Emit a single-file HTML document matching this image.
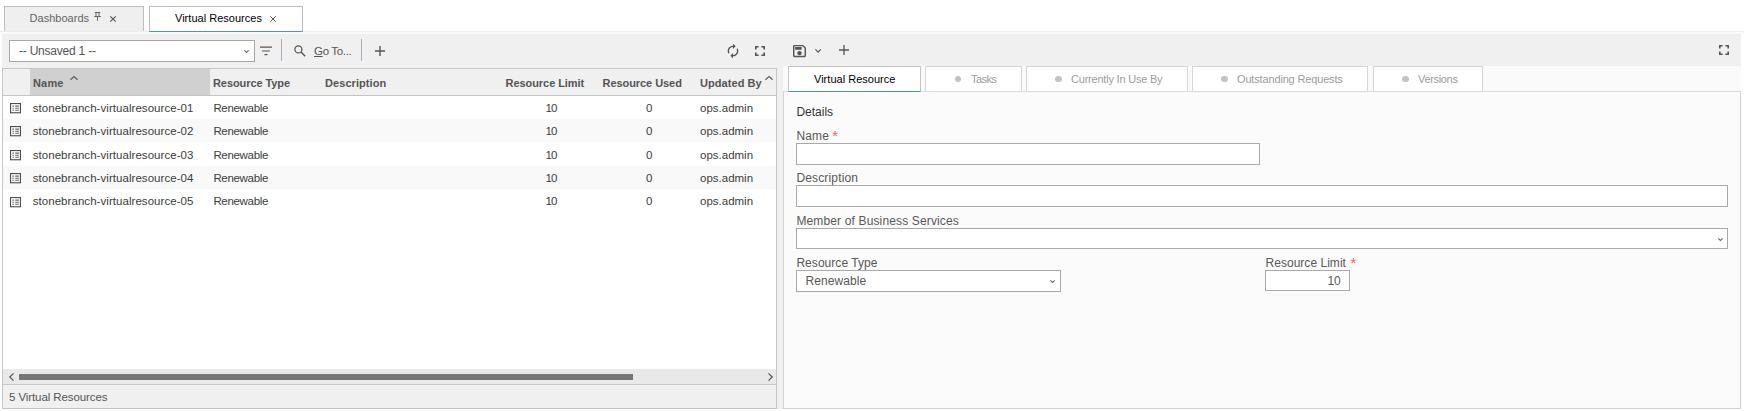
<!DOCTYPE html>
<html>
<head>
<meta charset="utf-8">
<title>Virtual Resources</title>
<style>
html,body{margin:0;padding:0;}
body{width:1744px;height:411px;position:relative;overflow:hidden;background:#fff;
 font-family:"Liberation Sans",sans-serif;font-size:12px;color:#3a3a3a;}
.a{position:absolute;box-sizing:border-box;}
.t{position:absolute;white-space:nowrap;line-height:14px;}
svg{position:absolute;overflow:visible;}
.hd{font-weight:bold;color:#545454;font-size:11px;margin-top:0.2px;}
.rw{color:#3c3c3c;}
.lb{color:#585858;}
.c1{left:32.7px;}.c2{left:213.4px;}.c3{left:545.5px;}.c4{left:646px;}.c5{left:700px;}
.tab2{background:#fff;border:1px solid #d6d6d6;border-bottom:none;top:66px;height:25px;}
.tt{color:#9c9c9c;top:72.3px;}
.dot{width:6.4px;height:6.4px;border-radius:50%;background:#c3c3c3;top:75.9px;margin-left:0.4px;}
.inp{background:#fff;border:1px solid #a9a9a9;}
.req{color:#ff5a5a;font-size:15px;}
#t_dash,#t_vr,#r_vr,.tt{font-size:11px;}
.rw{font-size:11.5px;}
#t_goto,#t_foot{font-size:11.5px;}
/*LS*/
#t_dash{letter-spacing:0.033px;}
#t_vr{letter-spacing:0.019px;}
#t_uns{letter-spacing:-0.221px;}
#t_goto{letter-spacing:-0.329px;}
#h_name{letter-spacing:0.167px;}
#h_rt{letter-spacing:-0.083px;}
#h_desc{letter-spacing:0.07px;}
#h_rl{letter-spacing:-0.054px;}
#h_ru{letter-spacing:-0.058px;}
#h_ub{letter-spacing:0.067px;}
.c1{letter-spacing:0.055px;}
.c2{letter-spacing:-0.325px;}
.c3{letter-spacing:-0.9px;}
#t_foot{letter-spacing:-0.089px;}
#r_vr{letter-spacing:0.02px;}
#r_tasks{letter-spacing:-0.575px;}
#r_cur{letter-spacing:-0.211px;}
#r_out{letter-spacing:-0.158px;}
#r_ver{letter-spacing:-0.329px;}
#f_name{letter-spacing:0.133px;}
#f_desc{letter-spacing:0.16px;}
#f_mem{letter-spacing:0.142px;}
#f_rt{letter-spacing:0.05px;}
#f_ren{letter-spacing:0.075px;}
#f_rl{letter-spacing:0.031px;}
#f_10{letter-spacing:-0.2px;}
/*ENDLS*/
</style>
</head>
<body>

<!-- top tab strip -->
<div class="a" style="left:0;top:31px;width:1744px;height:3px;background:#fafafa;border-top:1px solid #ececec;"></div>
<div class="a" style="left:4px;top:6px;width:140px;height:25px;background:#efefef;border:1px solid #bdbdbd;border-bottom:none;"></div>
<div class="t" id="t_dash" style="left:29.5px;top:11.3px;color:#646464;">Dashboards</div>
<svg style="left:94px;top:12px" width="7" height="9" viewBox="0 0 7 9"><path d="M0.8 0.5h5.4M2 0.5v4M5 0.5v4M0.200 4.5h6.6M3.5 4.5v4.3" stroke="#666" stroke-width="1" fill="none"/></svg>
<svg style="left:110.4px;top:15.5px" width="6" height="6" viewBox="0 0 6 6"><path d="M0.3 0.3L5.7 5.7M5.7 0.3L0.3 5.7" stroke="#555" stroke-width="1.15" fill="none"/></svg>
<div class="a" style="left:149px;top:6px;width:154px;height:26px;background:#fff;border:1px solid #bdbdbd;border-bottom:1px solid #4a90e8;"></div>
<div class="t" id="t_vr" style="left:175px;top:11.3px;color:#000;">Virtual Resources</div>
<svg style="left:269.5px;top:15.5px" width="6" height="6" viewBox="0 0 6 6"><path d="M0.3 0.3L5.7 5.7M5.7 0.3L0.3 5.7" stroke="#555" stroke-width="1" fill="none"/></svg>

<!-- toolbar background -->
<div class="a" style="left:2px;top:34px;width:1739px;height:32px;background:#f0f0f0;"></div>
<div class="a" style="left:2px;top:66px;width:781px;height:343px;background:#f0f0f0;"></div>

<!-- left toolbar -->
<div class="a inp" style="left:9px;top:40px;width:246px;height:22px;border-color:#a6a6a6;"></div>
<div class="t" id="t_uns" style="left:19px;top:44px;color:#555;">-- Unsaved 1 --</div>
<svg style="left:244px;top:49.5px" width="5" height="3" viewBox="0 0 5 3"><path d="M0.3 0.3L2.5 2.5L4.7 0.3" stroke="#6c6c6c" stroke-width="1.15" fill="none"/></svg>
<svg style="left:260px;top:46px" width="12" height="10" viewBox="0 0 12 10"><path d="M0 1.2h12M2 5h8M4.5 8.6h3" stroke="#555" stroke-width="1.2" fill="none"/></svg>
<div class="a" style="left:281px;top:39px;width:1px;height:22px;background:#a3adbd;"></div>
<svg style="left:293.5px;top:45px" width="12" height="12" viewBox="0 0 12 12"><circle cx="4.4" cy="4.4" r="3.5" stroke="#555" stroke-width="1.3" fill="none"/><path d="M7 7L11.2 11.2" stroke="#555" stroke-width="1.4"/></svg>
<div class="t" id="t_goto" style="left:314px;top:44px;color:#555;"><span style="text-decoration:underline;text-underline-offset:1.2px;">G</span>o To...</div>
<div class="a" style="left:361px;top:39px;width:1px;height:22px;background:#a3adbd;"></div>
<svg style="left:375px;top:46px" width="10" height="10" viewBox="0 0 10 10"><path d="M5 0v10M0 5h10" stroke="#555" stroke-width="1.4" fill="none"/></svg>

<svg style="left:725px;top:42.8px" width="16" height="16" viewBox="0 0 24 24"><path fill="#555" d="M12 6v3l4-4-4-4v3c-4.42 0-8 3.58-8 8 0 1.57.46 3.03 1.24 4.26L6.7 14.8c-.45-.83-.7-1.79-.7-2.8 0-3.310 2.69-6 6-6zm6.76 1.74L17.3 9.2c.44.84.7 1.79.7 2.8 0 3.31-2.69 6-6 6v-3l-4 4 4 4v-3c4.42 0 8-3.58 8-8 0-1.57-.46-3.03-1.24-4.26z"/></svg>
<svg style="left:755px;top:46px" width="10" height="10" viewBox="0 0 10 10"><path d="M0.8 3.6V0.8H3.6M6.4 0.8H9.2V3.6M9.2 6.4V9.2H6.4M3.6 9.2H0.8V6.4" stroke="#555" stroke-width="1.6" fill="none"/></svg>

<!-- grid -->
<div class="a" style="left:2px;top:68px;width:775px;height:341px;background:#fff;border:1px solid #c4c4c4;"></div>
<div class="a" style="left:3px;top:69px;width:773px;height:26px;background:#f0f0f0;"></div>
<div class="a" style="left:30px;top:69px;width:180px;height:26px;background:#d0d0d0;"></div>
<div class="a" style="left:3px;top:94.5px;width:773px;height:1.2px;background:#c4c4c4;"></div>
<div class="t hd" id="h_name" style="left:33px;top:76px;">Name</div>
<svg style="left:69.5px;top:76px" width="8" height="4" viewBox="0 0 8 4"><path d="M0.4 3.7L4 0.600L7.6 3.7" stroke="#606060" stroke-width="1.3" fill="none"/></svg>
<div class="t hd" id="h_rt" style="left:213px;top:76px;">Resource Type</div>
<div class="t hd" id="h_desc" style="left:325px;top:76px;">Description</div>
<div class="t hd" id="h_rl" style="left:505.5px;top:76px;">Resource Limit</div>
<div class="t hd" id="h_ru" style="left:602.5px;top:76px;">Resource Used</div>
<div class="t hd" id="h_ub" style="left:700px;top:76px;">Updated By</div>
<svg style="left:765px;top:76.2px" width="8" height="4" viewBox="0 0 8 4"><path d="M0.4 3.7L4 0.600L7.6 3.7" stroke="#606060" stroke-width="1.3" fill="none"/></svg>

<div>
<!-- row 1 -->
<svg style="left:10px;top:102.9px" width="11" height="10.3" viewBox="0 0 11 10.3"><rect x="0.55" y="0.55" width="9.9" height="9.2" stroke="#4c4c4c" stroke-width="1.1" fill="none"/><path d="M2.4 3.1h1.500M2.4 5.200h1.5M2.4 7.300h1.5M5.2 3.1h3.7M5.2 5.2h3.7M5.2 7.3h3.7" stroke="#686868" stroke-width="1.1" fill="none"/></svg>
<div class="t rw c1" id="r0n" style="top:100.82px;">stonebranch-virtualresource-01</div>
<div class="t rw c2" id="r0t" style="top:100.82px;">Renewable</div>
<div class="t rw c3" id="r0l" style="top:100.82px;">10</div>
<div class="t rw c4" id="r0u" style="top:100.82px;">0</div>
<div class="t rw c5" id="r0b" style="top:100.82px;">ops.admin</div>
<!-- row 2 -->
<div class="a" style="left:3px;top:119.0px;width:773px;height:23.4px;background:#f9f9f9;"></div>
<svg style="left:10px;top:126.3px" width="11" height="10.3" viewBox="0 0 11 10.3"><rect x="0.55" y="0.55" width="9.9" height="9.2" stroke="#4c4c4c" stroke-width="1.1" fill="none"/><path d="M2.4 3.1h1.500M2.4 5.200h1.5M2.4 7.300h1.5M5.2 3.1h3.7M5.2 5.2h3.7M5.2 7.3h3.7" stroke="#686868" stroke-width="1.1" fill="none"/></svg>
<div class="t rw c1" id="r1n" style="top:124.22px;">stonebranch-virtualresource-02</div>
<div class="t rw c2" id="r1t" style="top:124.22px;">Renewable</div>
<div class="t rw c3" id="r1l" style="top:124.22px;">10</div>
<div class="t rw c4" id="r1u" style="top:124.22px;">0</div>
<div class="t rw c5" id="r1b" style="top:124.22px;">ops.admin</div>
<!-- row 3 -->
<svg style="left:10px;top:149.7px" width="11" height="10.3" viewBox="0 0 11 10.3"><rect x="0.55" y="0.55" width="9.9" height="9.2" stroke="#4c4c4c" stroke-width="1.1" fill="none"/><path d="M2.4 3.1h1.500M2.4 5.200h1.5M2.4 7.300h1.5M5.2 3.1h3.7M5.2 5.2h3.7M5.2 7.3h3.7" stroke="#686868" stroke-width="1.1" fill="none"/></svg>
<div class="t rw c1" id="r2n" style="top:147.62px;">stonebranch-virtualresource-03</div>
<div class="t rw c2" id="r2t" style="top:147.62px;">Renewable</div>
<div class="t rw c3" id="r2l" style="top:147.62px;">10</div>
<div class="t rw c4" id="r2u" style="top:147.62px;">0</div>
<div class="t rw c5" id="r2b" style="top:147.62px;">ops.admin</div>
<!-- row 4 -->
<div class="a" style="left:3px;top:165.8px;width:773px;height:23.4px;background:#f9f9f9;"></div>
<svg style="left:10px;top:173.1px" width="11" height="10.3" viewBox="0 0 11 10.3"><rect x="0.55" y="0.55" width="9.9" height="9.2" stroke="#4c4c4c" stroke-width="1.1" fill="none"/><path d="M2.4 3.1h1.500M2.4 5.200h1.5M2.4 7.300h1.5M5.2 3.1h3.7M5.2 5.2h3.7M5.2 7.3h3.7" stroke="#686868" stroke-width="1.1" fill="none"/></svg>
<div class="t rw c1" id="r3n" style="top:171.02px;">stonebranch-virtualresource-04</div>
<div class="t rw c2" id="r3t" style="top:171.02px;">Renewable</div>
<div class="t rw c3" id="r3l" style="top:171.02px;">10</div>
<div class="t rw c4" id="r3u" style="top:171.02px;">0</div>
<div class="t rw c5" id="r3b" style="top:171.02px;">ops.admin</div>
<!-- row 5 -->
<svg style="left:10px;top:196.5px" width="11" height="10.3" viewBox="0 0 11 10.3"><rect x="0.55" y="0.55" width="9.9" height="9.2" stroke="#4c4c4c" stroke-width="1.1" fill="none"/><path d="M2.4 3.1h1.500M2.4 5.200h1.5M2.4 7.300h1.5M5.2 3.1h3.7M5.2 5.2h3.7M5.2 7.3h3.7" stroke="#686868" stroke-width="1.1" fill="none"/></svg>
<div class="t rw c1" id="r4n" style="top:194.42px;">stonebranch-virtualresource-05</div>
<div class="t rw c2" id="r4t" style="top:194.42px;">Renewable</div>
<div class="t rw c3" id="r4l" style="top:194.42px;">10</div>
<div class="t rw c4" id="r4u" style="top:194.42px;">0</div>
<div class="t rw c5" id="r4b" style="top:194.42px;">ops.admin</div>
</div>

<!-- scrollbar -->
<div class="a" style="left:3px;top:369px;width:773px;height:15px;background:#e9e9e9;"></div>
<div class="a" style="left:3px;top:384px;width:773px;height:1px;background:#c8c8c8;"></div>
<div class="a" style="left:19px;top:373.5px;width:614px;height:6.5px;background:#767676;"></div>
<svg style="left:8.5px;top:373px" width="5" height="8" viewBox="0 0 5 8"><path d="M4.5 0.3L0.8 4L4.5 7.7" stroke="#555" stroke-width="1.2" fill="none"/></svg>
<svg style="left:767.5px;top:373px" width="5" height="8" viewBox="0 0 5 8"><path d="M0.5 0.3L4.2 4L0.5 7.7" stroke="#555" stroke-width="1.2" fill="none"/></svg>
<div class="a" style="left:3px;top:385px;width:773px;height:23px;background:#f0f0f0;"></div>
<div class="t" id="t_foot" style="left:9px;top:390px;color:#555;">5 Virtual Resources</div>

<!-- right panel -->
<div class="a" style="left:783px;top:66px;width:958px;height:26px;background:#fafafa;"></div>
<div class="a" style="left:783px;top:91px;width:958px;height:318px;background:#fbfbfb;border:1px solid #d2d2d2;border-top-color:#dadada;"></div>
<svg style="left:793px;top:45px" width="13" height="12.2" viewBox="3 3 18 18" preserveAspectRatio="none"><path fill="#555" d="M17 3H5c-1.11 0-2 .9-2 2v14c0 1.1.89 2 2 2h14c1.1 0 2-.9 2-2V7l-4-4zm2 16H5V5h11.17L19 7.830V19zm-7-7c-1.66 0-3 1.34-3 3s1.34 3 3 3 3-1.34 3-3-1.34-3-3-3zM6 6h9v4H6z"/></svg>
<svg style="left:815px;top:49.3px" width="6.2" height="3.6" viewBox="0 0 6.2 3.6"><path d="M0.4 0.4L3.1 3.1L5.800 0.4" stroke="#5a5a5a" stroke-width="1.3" fill="none"/></svg>
<svg style="left:838.5px;top:45px" width="10" height="10" viewBox="0 0 10 10"><path d="M5 0v10M0 5h10" stroke="#555" stroke-width="1.3" fill="none"/></svg>
<svg style="left:1719px;top:45px" width="10" height="10" viewBox="0 0 10 10"><path d="M0.8 3.6V0.8H3.6M6.4 0.8H9.2V3.6M9.2 6.4V9.2H6.4M3.6 9.2H0.8V6.4" stroke="#555" stroke-width="1.6" fill="none"/></svg>

<div class="a" style="left:788px;top:66px;width:133px;height:26px;background:#fff;border:1px solid #c4c4c4;border-bottom:1px solid #4a90e8;"></div>
<div class="t" id="r_vr" style="left:814px;top:72.3px;color:#000;">Virtual Resource</div>
<div class="a tab2" style="left:925px;width:97px;"></div>
<div class="a dot" style="left:954.5px;"></div>
<div class="t tt" id="r_tasks" style="left:971px;">Tasks</div>
<div class="a tab2" style="left:1026px;width:162px;"></div>
<div class="a dot" style="left:1055px;"></div>
<div class="t tt" id="r_cur" style="left:1071px;">Currently In Use By</div>
<div class="a tab2" style="left:1192px;width:176px;"></div>
<div class="a dot" style="left:1221px;"></div>
<div class="t tt" id="r_out" style="left:1237px;">Outstanding Requests</div>
<div class="a tab2" style="left:1373px;width:110px;"></div>
<div class="a dot" style="left:1402px;"></div>
<div class="t tt" id="r_ver" style="left:1418px;">Versions</div>

<div class="t" id="f_det" style="left:796.4px;top:105px;color:#333;">Details</div>
<div class="t lb" id="f_name" style="left:796.4px;top:128.7px;">Name</div>
<div class="t req" id="f_star1" style="left:832.2px;top:129.2px;">*</div>
<div class="a inp" style="left:796px;top:143px;width:464px;height:22px;"></div>
<div class="t lb" id="f_desc" style="left:796.4px;top:170.7px;">Description</div>
<div class="a inp" style="left:796px;top:185.3px;width:932px;height:21.7px;"></div>
<div class="t lb" id="f_mem" style="left:796.4px;top:213.5px;">Member of Business Services</div>
<div class="a inp" style="left:796px;top:227.7px;width:932px;height:21.3px;"></div>
<svg style="left:1718px;top:237.7px" width="5" height="3" viewBox="0 0 5 3"><path d="M0.3 0.3L2.5 2.5L4.7 0.3" stroke="#6c6c6c" stroke-width="1.15" fill="none"/></svg>
<div class="t lb" id="f_rt" style="left:796.4px;top:255.7px;">Resource Type</div>
<div class="a inp" style="left:796px;top:270px;width:265px;height:22px;"></div>
<div class="t lb" id="f_ren" style="left:805.5px;top:273.8px;">Renewable</div>
<svg style="left:1050px;top:279.7px" width="5" height="3" viewBox="0 0 5 3"><path d="M0.3 0.3L2.5 2.5L4.7 0.3" stroke="#6c6c6c" stroke-width="1.15" fill="none"/></svg>
<div class="t lb" id="f_rl" style="left:1265.5px;top:255.7px;">Resource Limit</div>
<div class="t req" id="f_star2" style="left:1350.5px;top:255.9px;">*</div>
<div class="a inp" style="left:1265px;top:270px;width:85px;height:21px;"></div>
<div class="t lb" id="f_10" style="left:1327.5px;top:273.7px;">10</div>

</body>
</html>
